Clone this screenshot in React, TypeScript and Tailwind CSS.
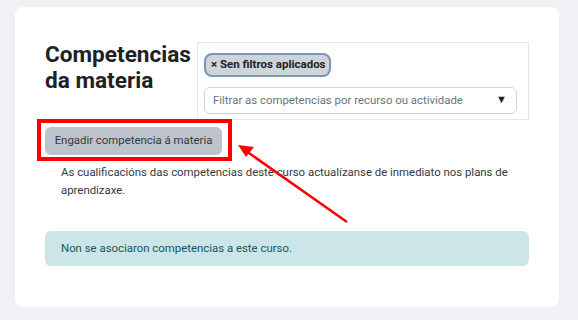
export default function App() {
  return (
    <div className="min-h-screen w-full bg-[#eff1f5] px-[15px] pt-[7px] font-['Roboto',sans-serif]">
      <div className="relative h-[300px] w-[544px] rounded-lg bg-white px-[30px] pt-[35px]">
        <div className="flex items-start gap-[5px]">
          <h2 className="w-[147px] text-[22.6px] font-bold leading-[26px] text-[#1d2125]">Competencias da materia</h2>
          <div className="flex h-[78px] w-[332px] flex-col gap-[10px] border border-[#e6e6e6] px-[6px] pt-[10px]">
            <div className="flex h-[24px] w-[127px] items-center whitespace-nowrap rounded-lg border-2 border-[#7a96b3] bg-[#ced4da] px-[5px] text-[11.5px] font-bold text-[#1d2125]">
              × Sen filtros aplicados
            </div>
            <div className="flex h-[27px] w-[313px] items-center justify-between rounded-md border border-[#ced4da] pl-[8px] pr-[9px] text-[11.4px] text-[#6a737b]">
              <span className="whitespace-nowrap">Filtrar as competencias por recurso ou actividade</span>
              <span className="text-[11px] text-[#1d2125]">▼</span>
            </div>
          </div>
        </div>
        <div className="relative mt-[7px] flex w-fit">
          <button className="h-[28px] w-[177px] whitespace-nowrap rounded-md bg-[#bcc3cb] text-[11.4px] text-[#343a40]">Engadir competencia á materia</button>
          <div className="absolute -left-[8px] -top-[8px] h-[42px] w-[195px] border-[4px] border-[#ff0000]" />
        </div>
        <p className="mt-[8px] pl-[16px] text-[11.4px] leading-[18px] text-[#333a40]">
          As cualificacións das competencias deste curso actualízanse de inmediato nos plans de aprendizaxe.
        </p>
        <div className="mt-[32px] flex h-[35px] items-center rounded-md bg-[#cce5e9] px-[16px] text-[11.4px] text-[#1a545c]">
          Non se asociaron competencias a este curso.
        </div>
        <svg className="absolute left-0 top-0" width="544" height="300" viewBox="15 7 544 300">
          <line x1="347" y1="222" x2="246" y2="151" stroke="#ff0000" strokeWidth="2.5" />
          <polygon points="238,145 254,147 246,157" fill="#ff0000" />
        </svg>
      </div>
    </div>
  );
}
